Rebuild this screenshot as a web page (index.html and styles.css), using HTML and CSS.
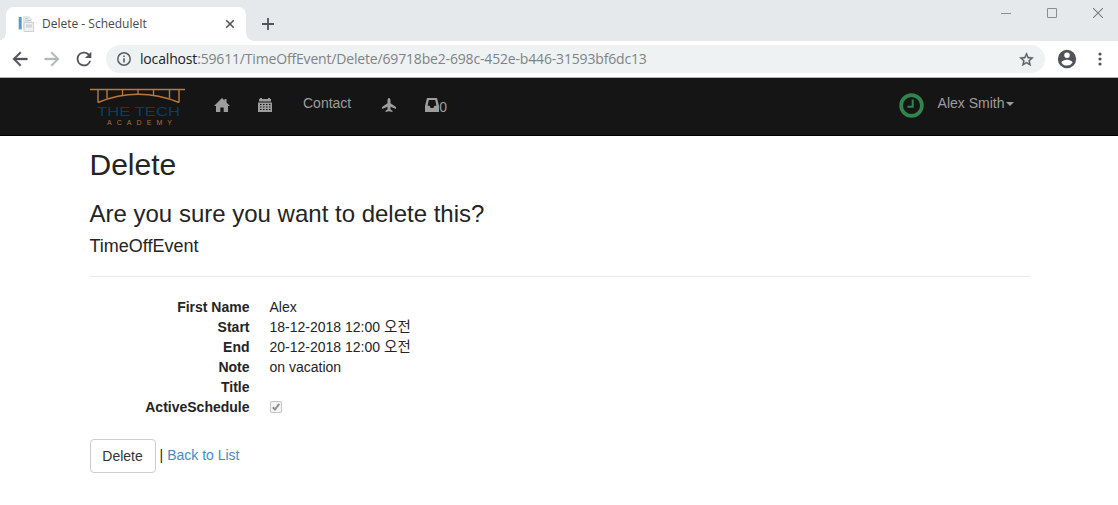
FILE: index.html
```html
<!DOCTYPE html>
<html lang="en">
<head>
<meta charset="utf-8">
<title>Delete - ScheduleIt</title>
<link rel="stylesheet" href="styles.css">
</head>
<body>
<header class="tabstrip">
  <div class="tab">
    <svg class="favicon" width="16" height="16" viewBox="0 0 16 16"><path d="M0 1h4v13H0z" fill="#cfe0ea"/><path d="M1 1h2.500v12H1z" fill="#4f9cc9"/><path d="M5 0h6l3 3v10H5z" fill="#e3e7eb"/><path d="M7 2.500h3M7 4.500h6" stroke="#c3cad1"/><path d="M6 6.500h9.500v9H6z" fill="#eef0f3" stroke="#cbd1d7"/><path d="M8 8.500h6v3H8z" fill="#cfd5da"/></svg>
    <span class="tab-title">Delete - ScheduleIt</span>
    <svg class="tab-close" width="10" height="10" viewBox="0 0 10 10"><path d="M1.200 1.200l7.600 7.600M8.800 1.200l-7.600 7.600" stroke="#50545a" stroke-width="1.600"/></svg>
  </div>
  <svg class="new-tab" width="12" height="12" viewBox="0 0 12 12"><path d="M6 0v12M0 6h12" stroke="#50545a" stroke-width="1.800"/></svg>
  <div class="window-buttons">
    <svg width="10" height="10" viewBox="0 0 10 10"><path d="M0 5.500h10" stroke="#8b8e91"/></svg>
    <svg width="10" height="10" viewBox="0 0 10 10"><path d="M.5.5h9v9h-9z" fill="none" stroke="#8b8e91"/></svg>
    <svg width="10" height="10" viewBox="0 0 10 10"><path d="M0 0l10 10M10 0L0 10" stroke="#7c7f82" stroke-width="1.100"/></svg>
  </div>
</header>
<div class="toolbar">
  <svg class="tool back" width="22" height="22" viewBox="0 0 24 24"><path fill="#50545a" stroke="#50545a" stroke-width=".4" d="M20 11H7.830l5.590-5.590L12 4l-8 8 8 8 1.410-1.410L7.830 13H20v-2z"/></svg>
  <svg class="tool forward" width="22" height="22" viewBox="0 0 24 24"><path fill="#b5b7ba" stroke="#b5b7ba" stroke-width=".4" d="M12 4l-1.410 1.410L16.170 11H4v2h12.170l-5.580 5.590L12 20l8-8z"/></svg>
  <svg class="tool reload" width="22" height="22" viewBox="0 0 24 24"><path fill="#50545a" d="M17.650 6.350A7.960 7.960 0 0 0 12 4a8 8 0 1 0 7.730 10h-2.080A6 6 0 1 1 12 6c1.660 0 3.140.69 4.220 1.780L13 11h7V4l-2.350 2.350z"/></svg>
  <div class="address">
    <svg class="info" width="16" height="16" viewBox="0 0 16 16"><circle cx="8" cy="8" r="6.200" fill="none" stroke="#5a5e63" stroke-width="1.500"/><path d="M8 7.200v4.200M8 4.400v1.600" stroke="#5a5e63" stroke-width="1.600"/></svg>
    <span class="url"><span class="host">localhost</span>:59611/TimeOffEvent/Delete/69718be2-698c-452e-b446-31593bf6dc13</span>
    <svg class="star" width="17" height="17" viewBox="0 0 24 24"><path fill="#5a5e63" stroke="#5a5e63" stroke-width=".5" d="M22 9.240l-7.190-.62L12 2 9.190 8.630 2 9.240l5.460 4.730L5.820 21 12 17.270 18.180 21l-1.630-7.030L22 9.240zM12 15.400l-3.760 2.270 1-4.280-3.320-2.880 4.380-.38L12 6.100l1.710 4.040 4.380.38-3.320 2.880 1 4.280L12 15.400z"/></svg>
  </div>
  <svg class="profile" width="22" height="22" viewBox="0 0 24 24"><path fill="#50545a" d="M12 2a10 10 0 1 0 0 20 10 10 0 0 0 0-20zm0 3a3 3 0 1 1 0 6 3 3 0 0 1 0-6zm0 14.200a7.200 7.200 0 0 1-6-3.220c.03-1.990 4-3.080 6-3.080s5.970 1.090 6 3.080a7.200 7.200 0 0 1-6 3.220z"/></svg>
  <svg class="menu" width="4" height="14" viewBox="0 0 4 14"><g fill="#50545a"><circle cx="2" cy="2" r="1.600"/><circle cx="2" cy="7" r="1.600"/><circle cx="2" cy="12" r="1.600"/></g></svg>
</div>
<nav class="navbar">
  <svg class="logo" width="96" height="40" viewBox="0 0 96 40">
    <g fill="none" stroke="#bd783d"><path d="M0 1.500h95" stroke-width="1.400"/><path d="M8 1.500v13M89 1.500v13M17 2v8.500M79.500 2v8.500" stroke-width="1.400"/><path d="M32.500 2v5M48 2v4M63.500 2v5" stroke-width="1.300"/><path d="M8 14.500Q48-1.800 89 14.500" stroke-width="1.500"/></g>
    <text class="logo-name" x="7" y="28" textLength="83" lengthAdjust="spacingAndGlyphs">THE TECH</text>
    <text class="logo-sub" x="17" y="37.200" textLength="65">ACADEMY</text>
  </svg>
  <svg class="home" width="16" height="15" viewBox="0 0 16 15"><path fill="#9d9d9d" d="M8 0l2.500 2.500V1h2v3.500L16 8h-2v6H9.700V9.500H6.300V14H2V8H0z"/></svg>
  <svg class="calendar" width="14" height="14" viewBox="0 0 14 14"><path fill="#9d9d9d" d="M1 1h1V0h2v1h6V0h2v1h1v2.500H1z"/><path fill="#9d9d9d" fill-rule="evenodd" d="M0 4.500h14V14H0zM2 6v1h1.500V6zm3 0v1h1.500V6zm3 0v1h1.500V6zm3 0v1h1.500V6zM2 8.500v1h1.500v-1zm3 0v1h1.500v-1zm3 0v1h1.500v-1zm3 0v1h1.500v-1zM2 11v1h1.500v-1zm3 0v1h1.500v-1zm3 0v1h1.500v-1zm3 0v1h1.500v-1z"/></svg>
  <span class="contact">Contact</span>
  <svg class="plane" width="14" height="14" viewBox="0 0 14 14"><path fill="#9d9d9d" d="M7 0c.9 0 1.500 1.200 1.500 2.500v2.700L14 9v1.900L8.500 8.800v2.700l2 1.300V14L7 13.200 3.500 14v-1.200l2-1.300V8.800L0 10.900V9l5.500-3.800V2.500C5.500 1.200 6.100 0 7 0z"/></svg>
  <svg class="inbox" width="14" height="14" viewBox="0 0 14 14"><path fill="#9d9d9d" fill-rule="evenodd" d="M2 0h10l2 8v6H0V8zM3.800 2L2.600 7.800h2l1 2.200h2.800l1-2.200h2L10.200 2z"/></svg>
  <span class="count">0</span>
  <svg class="clock" width="25" height="25" viewBox="0 0 25 25"><circle cx="12.500" cy="12.500" r="10.400" fill="none" stroke="#2f854c" stroke-width="3.700"/><path d="M13.700 6.500v7.200H8.500" fill="none" stroke="#2f854c" stroke-width="2"/></svg>
  <span class="user">Alex Smith</span><i class="caret"></i>
</nav>
<main class="content">
  <h2>Delete</h2>
  <h3>Are you sure you want to delete this?</h3>
  <h4>TimeOffEvent</h4>
  <hr>
  <dl class="details">
    <dt>First Name</dt><dd>Alex</dd>
    <dt>Start</dt><dd>18-12-2018 12:00 <span class="korean">오전</span></dd>
    <dt>End</dt><dd>20-12-2018 12:00 <span class="korean">오전</span></dd>
    <dt>Note</dt><dd>on vacation</dd>
    <dt>Title</dt><dd></dd>
    <dt>ActiveSchedule</dt><dd><svg class="check" width="12" height="12" viewBox="0 0 12 12"><rect x=".5" y=".5" width="11" height="11" rx="1.500" fill="#f5f5f5" stroke="#c3c3c3"/><path d="M2.800 6.200l2.200 2.300 4.200-5.700" fill="none" stroke="#8f8f8f" stroke-width="2"/></svg></dd>
  </dl>
  <div class="actions"><button class="btn" type="button">Delete</button><span class="sep">|</span><a class="link">Back to List</a></div>
</main>
</body>
</html>
```
FILE: styles.css
```css
* { box-sizing: border-box; }
body { margin: 0; background: #fff; color: #242424; font: 14px/20px "Liberation Sans", Arial, "Noto Sans CJK KR", sans-serif; height: 505px; overflow: hidden; }
svg { display: block; flex: none; }
.tabstrip { height: 41px; background: #e5e9ec; display: flex; align-items: flex-start; padding-left: 6px; }
.tab { position: relative; width: 240px; height: 34px; margin-top: 7px; background: #fff; border-radius: 8px 8px 0 0; display: flex; align-items: center; padding: 0 12px; }
.tab::before, .tab::after { content: ""; position: absolute; bottom: 0; width: 8px; height: 8px; }
.tab::before { left: -8px; background: radial-gradient(circle at 0 0, transparent 7.5px, #fff 8px); }
.tab::after { right: -8px; background: radial-gradient(circle at 100% 0, transparent 7.5px, #fff 8px); }
.tab-title { margin-left: 8px; flex: 1; font: 12px/16px "Open Sans", "Noto Sans", sans-serif; color: #45484c; white-space: nowrap; }
.tab-close { margin-right: -1px; }
.new-tab { margin: 18px 0 0 16px; }
.window-buttons { display: flex; gap: 36px; margin: 8px 15px 0 auto; }
.toolbar { height: 37px; border-bottom: 1px solid #b0b3b5; display: flex; align-items: center; padding-left: 9px; }
.forward { margin-left: 10px; }
.reload { margin-left: 10px; }
.address { width: 939px; height: 28px; margin-left: 11px; border-radius: 14px; background: #eef2f3; display: flex; align-items: center; padding: 0 10px 0 10px; }
.url { margin-left: 8px; flex: 1; font: 14px/20px "Open Sans", "Noto Sans", sans-serif; letter-spacing: -.17px; color: #7e8386; white-space: nowrap; }
.host { color: #202124; }
.profile { margin-left: 11px; }
.menu { margin-left: 20px; }
.navbar { height: 58px; background: #151515; border-bottom: 1px solid #000; color: #9d9d9d; display: flex; align-items: flex-start; padding-left: 90px; }
.logo { margin-top: 10px; }
.logo-name { font: 12px "Liberation Sans", sans-serif; fill: #063e65; }
.logo-sub { font: 7px "Liberation Sans", sans-serif; fill: #b0713a; }
.home { margin: 20px 0 0 28px; }
.calendar { margin: 20px 0 0 28px; }
.contact { margin: 15px 0 0 31px; }
.plane { margin: 20px 0 0 31px; }
.inbox { margin: 20px 0 0 29px; }
.count { margin: 19px 0 0 0; }
.clock { margin: 15px 0 0 auto; }
.user { margin: 15px 0 0 14px; }
.caret { width: 8px; margin: 24px 104.5px 0 1px; border: 4px solid transparent; border-top-color: #9d9d9d; border-bottom: 0; }
.content { padding: 12px 88px 0 89.5px; }
h2, h3, h4 { font-weight: 400; line-height: 1.1; margin: 0 0 10px; }
h2 { font-size: 30px; margin-bottom: 20px; }
h3 { font-size: 24px; }
h4 { font-size: 18px; }
hr { margin: 19px 0 20px; border: 0; border-top: 1px solid #eaeaea; }
.details { display: grid; grid-template-columns: 160px 1fr; column-gap: 20px; grid-auto-rows: 20px; margin: 0; }
dt { font-weight: 700; text-align: right; }
dd { margin: 0; }
.korean { font: 14.5px/14px "Noto Sans CJK KR", sans-serif; letter-spacing: .3px; }
.check { margin-top: 4px; }
.actions { display: flex; margin-top: 22px; }
.btn { width: 66px; height: 34px; padding: 0; font: inherit; color: #333; background: #fff; border: 1px solid #ccc; border-radius: 4px; }
.sep { margin: 6px 4px 0; }
.link { color: #428bca; margin-top: 6px; }
```
